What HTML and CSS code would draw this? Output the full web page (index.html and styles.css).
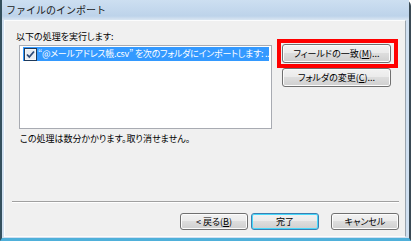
FILE: index.html
```html
<!DOCTYPE html>
<html lang="ja">
<head>
<meta charset="utf-8">
<title>ファイルのインポート</title>
<link rel="stylesheet" href="styles.css">
</head>
<body>
<div class="window">
  <div class="titlebar"><span class="title">ファイルのインポート</span></div>
  <div class="client">
    <div class="main">
      <div class="left">
        <div class="label">以下の処理を実行します:</div>
        <div class="list">
          <div class="row selected">
            <svg class="check" width="13" height="13" viewBox="0 0 13 13">
              <rect x="0.5" y="0.5" width="12" height="12" fill="#f4f6f8" stroke="#1f3a5a"/>
              <rect x="2" y="2" width="9" height="9" fill="#e6ecf2"/>
              <path d="M3 6.5 L5.3 9 L10 3.5" fill="none" stroke="#2c4a78" stroke-width="1.8"/>
            </svg>
            <span class="rowtext">“@メールアドレス帳.csv” を次のフォルダにインポートします: ..</span>
          </div>
        </div>
        <div class="note">この処理は数分かかります。取り消せません。</div>
      </div>
      <div class="side">
        <button class="btn btn-wide highlight">フィールドの一致(<u>M</u>)...</button>
        <button class="btn btn-wide">フォルダの変更(<u>C</u>)...</button>
      </div>
    </div>
    <div class="sep"></div>
    <div class="footer">
      <button class="btn btn-foot">&lt; 戻る(<u>B</u>)</button>
      <button class="btn btn-foot default">完了</button>
      <button class="btn btn-foot cancel">キャンセル</button>
    </div>
  </div>
</div>
</body>
</html>
```
FILE: styles.css
```css
* { box-sizing: border-box; }
html, body { margin: 0; padding: 0; }
body {
  width: 411px;
  height: 241px;
  overflow: hidden;
  font-family: "Noto Sans CJK JP", "Noto Sans", sans-serif;
  font-size: 9px;
  font-feature-settings: "palt" 1;
  color: #000;
}
.window {
  width: 411px;
  height: 241px;
  display: flex;
  flex-direction: column;
  background: #cfdff0;
  border-left: 2px solid #34505e;
  border-right: 2px solid #3a4a55;
  border-bottom: 3px solid #4fb0da;
  border-top-right-radius: 6px;
}
.titlebar {
  height: 20px;
  flex: none;
  display: flex;
  align-items: center;
  padding-left: 4px;
  background: linear-gradient(#cddff1, #bdd3ea 80%, #dae6f2);
}
.title {
  font-size: 10px;
  font-feature-settings: normal;
  color: #1a1a1a;
  line-height: 1;
}
.client {
  flex: 1;
  margin: 0 3px 1px 2px;
  border: 1px solid #fbfcfd;
  border-right-color: #9aa4ad;
  background: #f0f0f0;
  display: flex;
  flex-direction: column;
}
.main {
  display: flex;
  padding: 10px 0 0 11px;
}
.left {
  width: 256px;
  display: flex;
  flex-direction: column;
}
.label {
  line-height: 12px;
  height: 14px;
}
.list {
  margin-left: 3px;
  height: 84px;
  background: #fff;
  border: 1px solid #a8abb2;
  padding: 1px 2px 0 3px;
}
.row {
  height: 14px;
  display: flex;
  align-items: center;
  gap: 1px;
  padding-left: 1px;
  overflow: hidden;
  white-space: nowrap;
}
.row.selected {
  background: #3399ff;
  color: #fff;
}
.check { flex: none; }
.rowtext {
  overflow: hidden;
  line-height: 14px;
  letter-spacing: -0.25px;
}
.note {
  margin-top: 4px;
  margin-left: 4px;
  line-height: 12px;
}
.side {
  display: flex;
  flex-direction: column;
  gap: 5px;
  padding: 13px 0 0 10px;
}
.btn {
  position: relative;
  font-family: inherit;
  font-size: 9px;
  font-feature-settings: "palt" 1;
  color: #000;
  margin: 0;
  padding: 0;
  border: 1px solid #707070;
  border-radius: 3px;
  background: linear-gradient(#f2f2f2 0%, #ebebeb 45%, #dddddd 50%, #cfcfcf 100%);
  box-shadow: inset 0 0 0 1px #fcfcfc;
  line-height: 1;
  display: flex;
  align-items: center;
  justify-content: center;
}
.btn u { text-decoration: underline; }
.btn-wide {
  width: 109px;
  height: 19px;
}
.highlight::after {
  content: "";
  position: absolute;
  top: -6px;
  bottom: -6px;
  left: -6px;
  right: -8px;
  border: 4px solid #ff0000;
}
.sep {
  margin: 0 6px 0 7px;
  margin-top: auto;
  height: 2px;
  border-top: 1px solid #a0a0a0;
  border-bottom: 1px solid #ffffff;
}
.footer {
  display: flex;
  justify-content: flex-end;
  padding: 10px 6px 6px 0;
}
.btn-foot {
  width: 68px;
  height: 17px;
}
.default {
  margin-left: 3px;
  border-color: #3c7fb1;
  box-shadow: inset 0 0 0 1px #48d8fb;
}
.cancel { margin-left: 12px; }
```
